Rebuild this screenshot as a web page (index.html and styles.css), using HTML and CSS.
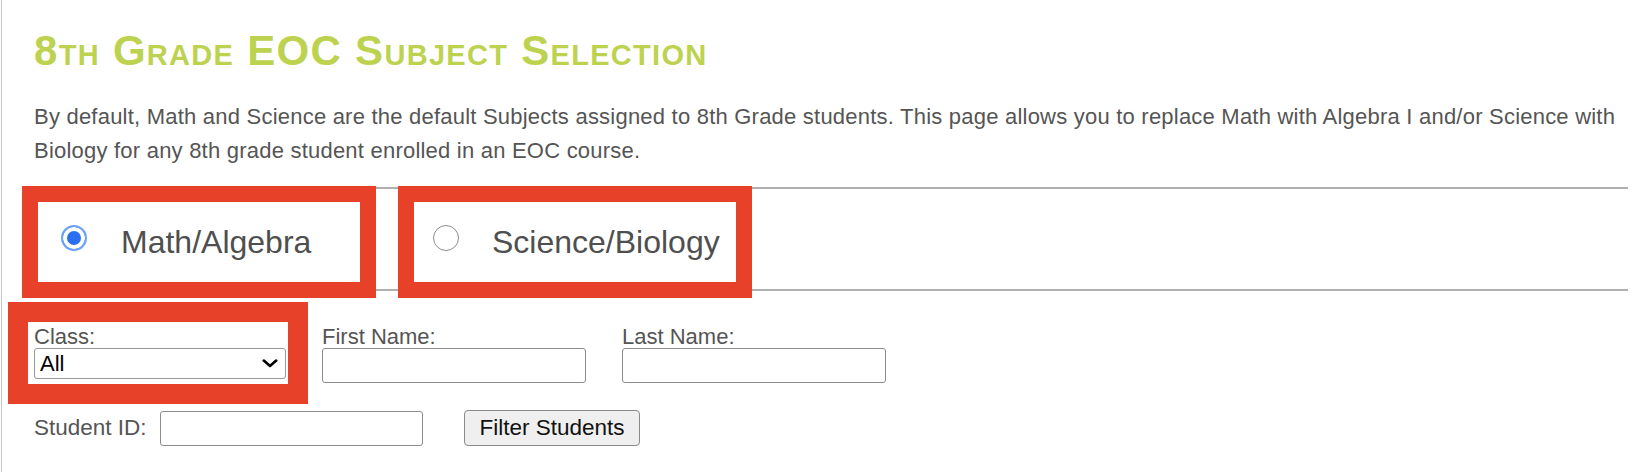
FILE: index.html
```html
<!DOCTYPE html>
<html lang="en">
<head>
<meta charset="utf-8">
<title>8th Grade EOC Subject Selection</title>
<link rel="stylesheet" href="styles.css">
</head>
<body>
<div class="page">
  <h1 class="title">8th Grade EOC Subject Selection</h1>
  <p class="intro">By default, Math and Science are the default Subjects assigned to 8th Grade students. This page allows you to replace Math with Algebra I and/or Science with Biology for any 8th grade student enrolled in an EOC course.</p>

  <div class="subject-row">
    <label class="subject subject--math">
      <span class="radio radio--checked"></span>
      <span class="subject-text">Math/Algebra</span>
    </label>
    <label class="subject subject--science">
      <span class="radio"></span>
      <span class="subject-text">Science/Biology</span>
    </label>
  </div>

  <div class="filter-row">
    <div class="field field--class">
      <span class="field-label">Class:</span>
      <div class="select-wrap">
        <select class="select"><option>All</option></select>
        <svg class="chevron" width="16" height="9" viewBox="0 0 16 9"><polyline points="1.8,1.6 8,7 14.2,1.6" fill="none" stroke="#000" stroke-width="2.6" stroke-linecap="round" stroke-linejoin="round"/></svg>
      </div>
    </div>
    <div class="field field--first">
      <span class="field-label">First Name:</span>
      <input class="text-input" type="text">
    </div>
    <div class="field field--last">
      <span class="field-label">Last Name:</span>
      <input class="text-input" type="text">
    </div>
  </div>

  <div class="id-row">
    <span class="inline-label">Student ID:</span>
    <input class="text-input text-input--id" type="text">
    <button class="btn" type="button">Filter Students</button>
  </div>
</div>
</body>
</html>
```

FILE: styles.css
```css
* { box-sizing: border-box; }

html, body {
  margin: 0;
  padding: 0;
  background: #fff;
}

body {
  font-family: "Liberation Sans", Arial, sans-serif;
  color: #555;
}

.page {
  margin-left: 1px;
  border-left: 1px solid #c4c4c4;
  min-height: 472px;
  padding: 30px 20px 0 32px;
}

.title {
  margin: 0;
  font-size: 42px;
  line-height: 42px;
  font-weight: bold;
  font-variant: small-caps;
  letter-spacing: 1.3px;
  color: #bdd24f;
}

.intro {
  margin: 28px 0 0 0;
  font-size: 22px;
  line-height: 34px;
  letter-spacing: 0.22px;
  color: #555;
}

.subject-row {
  display: flex;
  align-items: flex-start;
  height: 104px;
  margin-top: 19px;
  border-top: 2px solid #b0b0b0;
  border-bottom: 2px solid #b0b0b0;
}

.subject {
  display: flex;
  align-items: center;
  width: 354px;
  height: 112px;
  margin-top: -3px;
  border: 16px solid #e8412a;
  background: #fff;
  font-size: 32px;
  color: #4f4f4f;
}

.subject--math {
  margin-left: -12px;
  padding-left: 23px;
  gap: 34px;
}

.subject--science {
  margin-left: 22px;
  padding-left: 19px;
  gap: 33px;
}

.radio {
  flex: none;
  width: 26px;
  height: 26px;
  margin-top: -8px;
  border-radius: 50%;
  border: 1.5px solid #8d8d8d;
  background: #fff;
}

.radio--checked {
  border: 2px solid #6ea4f7;
  background: #2b6ff0;
  box-shadow: inset 0 0 0 4px #fff;
}

.filter-row {
  display: flex;
  align-items: flex-start;
  margin-top: 11px;
}

.field {
  display: flex;
  flex-direction: column;
}

.field--class {
  margin-left: -26px;
  border: 20px solid #e8412a;
  padding: 3px 2px 5px 6px;
}

.field--first {
  margin-left: 14px;
  margin-top: 23px;
}

.field--last {
  margin-left: 36px;
  margin-top: 23px;
}

.field-label {
  font-size: 22px;
  line-height: 23px;
  color: #555;
}

.select-wrap {
  position: relative;
  width: 252px;
  height: 31px;
}

.select {
  appearance: none;
  -webkit-appearance: none;
  width: 100%;
  height: 100%;
  margin: 0;
  padding: 0 0 0 5px;
  border: 1px solid #999;
  border-radius: 3px;
  background: #fff;
  font-family: "Liberation Sans", Arial, sans-serif;
  font-size: 22px;
  color: #000;
}

.chevron {
  position: absolute;
  right: 8px;
  top: 11px;
  pointer-events: none;
}

.text-input {
  width: 264px;
  height: 35px;
  margin: 0;
  padding: 0 6px;
  border: 1px solid #8c8c8c;
  border-radius: 3px;
  background: #fff;
  font-family: "Liberation Sans", Arial, sans-serif;
  font-size: 20px;
}

.id-row {
  display: flex;
  align-items: center;
  margin-top: 6px;
}

.inline-label {
  width: 126px;
  font-size: 22.5px;
  color: #555;
}

.text-input--id {
  width: 263px;
}

.btn {
  width: 176px;
  height: 36px;
  margin: 0 0 0 41px;
  padding: 0;
  border: 1px solid #8a8a8a;
  border-radius: 4px;
  background: #efefef;
  font-family: "Liberation Sans", Arial, sans-serif;
  font-size: 22.5px;
  color: #111;
}
```
